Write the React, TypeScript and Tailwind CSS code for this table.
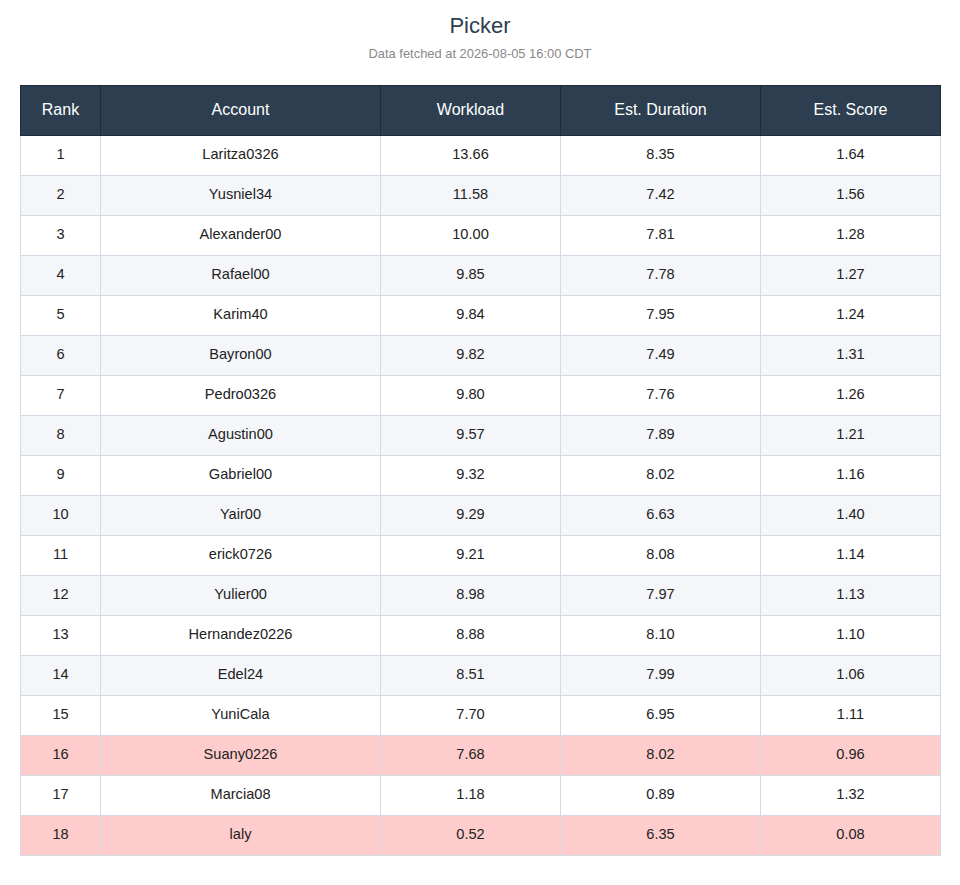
const rows = [
  { rank: 1, account: "Laritza0326", workload: "13.66", duration: "8.35", score: "1.64" },
  { rank: 2, account: "Yusniel34", workload: "11.58", duration: "7.42", score: "1.56" },
  { rank: 3, account: "Alexander00", workload: "10.00", duration: "7.81", score: "1.28" },
  { rank: 4, account: "Rafael00", workload: "9.85", duration: "7.78", score: "1.27" },
  { rank: 5, account: "Karim40", workload: "9.84", duration: "7.95", score: "1.24" },
  { rank: 6, account: "Bayron00", workload: "9.82", duration: "7.49", score: "1.31" },
  { rank: 7, account: "Pedro0326", workload: "9.80", duration: "7.76", score: "1.26" },
  { rank: 8, account: "Agustin00", workload: "9.57", duration: "7.89", score: "1.21" },
  { rank: 9, account: "Gabriel00", workload: "9.32", duration: "8.02", score: "1.16" },
  { rank: 10, account: "Yair00", workload: "9.29", duration: "6.63", score: "1.40" },
  { rank: 11, account: "erick0726", workload: "9.21", duration: "8.08", score: "1.14" },
  { rank: 12, account: "Yulier00", workload: "8.98", duration: "7.97", score: "1.13" },
  { rank: 13, account: "Hernandez0226", workload: "8.88", duration: "8.10", score: "1.10" },
  { rank: 14, account: "Edel24", workload: "8.51", duration: "7.99", score: "1.06" },
  { rank: 15, account: "YuniCala", workload: "7.70", duration: "6.95", score: "1.11" },
  { rank: 16, account: "Suany0226", workload: "7.68", duration: "8.02", score: "0.96" },
  { rank: 17, account: "Marcia08", workload: "1.18", duration: "0.89", score: "1.32" },
  { rank: 18, account: "laly", workload: "0.52", duration: "6.35", score: "0.08" },
];

const headers = [
  { label: "Rank", width: "w-[80px]" },
  { label: "Account", width: "w-[280px]" },
  { label: "Workload", width: "w-[180px]" },
  { label: "Est. Duration", width: "w-[200px]" },
  { label: "Est. Score", width: "w-[180px]" },
];

const App = () => {
  return (
    <div className="min-h-screen bg-white px-5 pt-[13px] font-['Liberation_Sans',Arial,sans-serif] text-[#333]">
      <h1 className="text-center text-[22px] leading-[26px] text-[#2c3e50]">
        Picker
      </h1>
      <p className="mt-[8px] text-center text-[12.9px] leading-[14px] text-[#888]">
        Data fetched at 2026-08-05 16:00 CDT
      </p>

      <table className="mt-[24px] w-[920px] table-fixed border-collapse text-center">
        <thead>
          <tr className="bg-[#2c3e50] text-white">
            {headers.map((h) => (
              <th
                key={h.label}
                className={`${h.width} h-[50px] border border-[#1f2b38] pb-[2px] text-[16px] font-normal`}
              >
                {h.label}
              </th>
            ))}
          </tr>
        </thead>
        <tbody className="text-[14.6px] leading-[18px] text-[#222]">
          {rows.map((r, i) => {
            const bad = Number(r.score) < 1;
            const bg = bad ? "bg-[#ffcccc]" : i % 2 === 1 ? "bg-[#f4f6f9]" : "bg-white";
            return (
              <tr key={r.rank} className={bg}>
                <td className="h-[40px] border border-[#d3dae3] pb-[4px]">{r.rank}</td>
                <td className="h-[40px] border border-[#d3dae3] pb-[4px]">{r.account}</td>
                <td className="h-[40px] border border-[#d3dae3] pb-[4px]">{r.workload}</td>
                <td className="h-[40px] border border-[#d3dae3] pb-[4px]">{r.duration}</td>
                <td className="h-[40px] border border-[#d3dae3] pb-[4px]">{r.score}</td>
              </tr>
            );
          })}
        </tbody>
      </table>
    </div>
  );
};

export default App;
